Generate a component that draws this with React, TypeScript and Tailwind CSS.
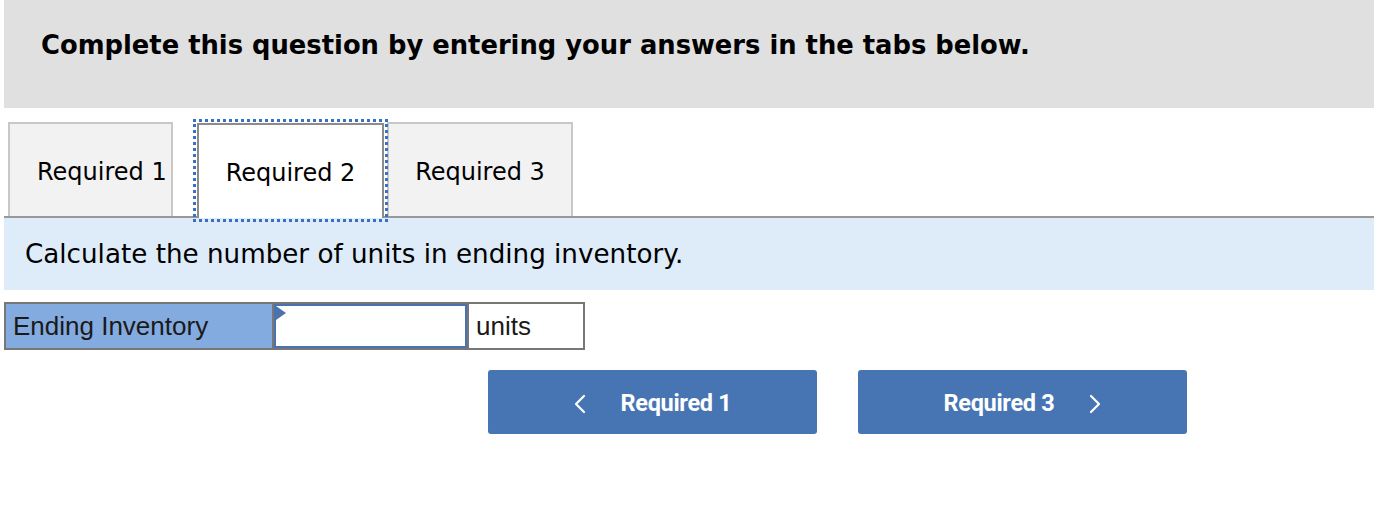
export default function App() {
  return (
    <div className="w-[1396px] h-[508px] bg-white px-[4px] pr-[22px]">
      <div className="h-[108px] bg-[#e0e0e0] pl-[37px] pt-[26px]">
        <h1 className="text-[25.8px] font-bold text-black font-['DejaVu_Sans',sans-serif]">
          Complete this question by entering your answers in the tabs below.
        </h1>
      </div>

      <div className="mt-[14px] flex items-end pl-[4px] border-b-2 border-[#999]">
        <div className="w-[165px] h-[94px] bg-[#f2f2f2] border-2 border-b-0 border-[#c8c8c8] flex items-center pt-[4px] pl-[27px] text-[24px] text-black font-['DejaVu_Sans',sans-serif]">
          Required 1
        </div>
        <div className="ml-[24px] w-[187px] h-[95px] bg-white border-2 border-b-0 border-[#8c8c8c] outline-[3px] outline-dotted outline-[#3a6fc4] outline-offset-[1px] flex items-center justify-center pt-[2px] text-[24px] text-black font-['DejaVu_Sans',sans-serif] relative z-10 -mb-[2px]">
          Required 2
        </div>
        <div className="ml-[3px] w-[186px] h-[94px] bg-[#f2f2f2] border-2 border-b-0 border-[#c8c8c8] flex items-center justify-center pt-[4px] text-[24px] text-black font-['DejaVu_Sans',sans-serif]">
          Required 3
        </div>
      </div>

      <div className="h-[72px] bg-[#deebf8] flex items-center pl-[21px] pt-[2px] text-[26.2px] text-black font-['DejaVu_Sans',sans-serif]">
        Calculate the number of units in ending inventory.
      </div>

      <div className="mt-[12px] flex h-[48px] font-['Liberation_Sans',Arial,sans-serif] text-[26px] text-[#1a1a1a]">
        <div className="w-[270px] bg-[#84abdf] border-2 border-[#777] flex items-center pl-[7px]">
          Ending Inventory
        </div>
        <div className="relative w-[193px] bg-white border-y-2 border-[#777] flex">
          <div className="flex-1 border-2 border-[#4a72b0]" />
          <div className="absolute left-[2px] top-[2px] w-0 h-0 border-t-[7px] border-b-[7px] border-l-[10px] border-t-transparent border-b-transparent border-l-[#4a72b0]" />
        </div>
        <div className="w-[118px] bg-white border-2 border-[#777] flex items-center pl-[7px]">
          units
        </div>
      </div>

      <div className="mt-[20px] flex pl-[484px] gap-[41px] font-['Roboto',sans-serif]">
        <button className="w-[329px] h-[64px] rounded-[3px] bg-[#4775b3] text-white flex items-center justify-center gap-[33px] pt-[3px] text-[23.5px] font-bold tracking-[-0.3px]">
          <svg width="14" height="20" viewBox="0 0 14 20" fill="none" stroke="currentColor" strokeWidth="2.2" strokeLinecap="round" strokeLinejoin="round">
            <polyline points="11,2 3,10 11,18" />
          </svg>
          <span>Required 1</span>
        </button>
        <button className="w-[329px] h-[64px] rounded-[3px] bg-[#4775b3] text-white flex items-center justify-center gap-[33px] pt-[3px] text-[23.5px] font-bold tracking-[-0.3px]">
          <span>Required 3</span>
          <svg width="14" height="20" viewBox="0 0 14 20" fill="none" stroke="currentColor" strokeWidth="2.2" strokeLinecap="round" strokeLinejoin="round">
            <polyline points="3,2 11,10 3,18" />
          </svg>
        </button>
      </div>
    </div>
  );
}
